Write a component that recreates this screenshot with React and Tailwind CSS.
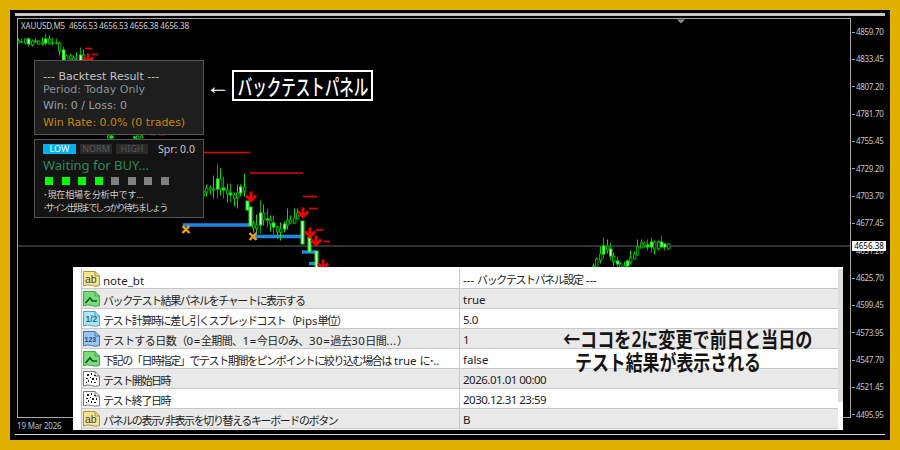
const rnd = (s) => { const v = Math.sin(s * 127.1 + 11.7) * 43758.5453; return v - Math.floor(v); };

function series(points, seed, amp = 7, step = 3.4) {
  const out = [];
  let prev = points[0][1];
  let i = 0;
  for (let x = points[0][0]; x <= points[points.length - 1][0]; x += step) {
    let k = 0;
    while (k < points.length - 2 && points[k + 1][0] < x) k++;
    const [x0, y0] = points[k];
    const [x1, y1] = points[k + 1];
    const base = y0 + ((y1 - y0) * (x - x0)) / (x1 - x0);
    const y = base + (rnd(seed + i) - 0.5) * amp;
    const top = Math.min(prev, y);
    const bot = Math.max(prev, y);
    const hi = top - rnd(seed + i + 40) * amp;
    const lo = bot + rnd(seed + i + 80) * amp * 0.9;
    out.push({ x: Math.round(x), top: Math.round(top), bot: Math.round(bot) + 1, hi: Math.round(hi), lo: Math.round(lo), kind: rnd(seed + i + 120) });
    prev = y;
    i++;
  }
  return out;
}

const candles = [
  ...series([[18, 40], [30, 41], [45, 39], [55, 41]], 1, 5),
  ...series([[56, 42], [60, 54], [66, 57], [80, 56], [90, 62]], 2, 8),
  ...series([[108, 136], [112, 136]], 3, 3),
  ...series([[134, 136], [144, 136]], 4, 3),
  ...series([[203, 194], [209, 183], [218, 180], [228, 190], [240, 188], [247, 196]], 5, 14),
  ...series([[253, 222], [262, 212], [272, 222], [282, 226], [292, 218], [300, 216]], 7, 12),
  ...series([[593, 265], [598, 250], [606, 244], [612, 258], [622, 264], [630, 260], [637, 246], [650, 243], [670, 245]], 6, 8),
];

const big = [[247, 200, 210], [250, 206, 226], [302, 220, 244], [309, 236, 252], [316, 250, 268]];
const reds = [[203, 250, 152], [250, 303, 172.5], [303, 317, 196], [309, 317, 208], [316, 323, 229.5], [323, 330, 241], [85, 92, 48], [92, 98, 54], [151, 156, 134], [159, 165, 134]];
const arrows = [[88, 52], [251, 190], [303, 206], [310, 226], [316, 234], [323, 258]];
const blues = [[183, 250, 224.5], [253, 303, 236], [302, 316, 251.5], [309, 316, 263]];
const crosses = [[186, 229], [253, 236]];
const prices = ["4859.70", "4833.45", "4807.20", "4781.70", "4755.45", "4729.20", "4703.70", "4677.45", "4651.20", "4625.70", "4599.45", "4573.95", "4547.70", "4521.45", "4495.95"];

function Chart() {
  return (
    <svg className="absolute inset-0 h-full w-full" viewBox="18 19 832 397">
      <path d="M18 245.5H850" stroke="#444" strokeWidth="1.5" />
      {blues.map(([a, b, y], i) => <path key={i} d={`M${a} ${y}H${b}`} stroke="#1e88e5" strokeWidth="3.4" />)}
      {candles.map((c, i) => (
        <g key={i}>
          <path d={`M${c.x + 0.5} ${c.hi}V${c.lo}`} stroke={c.kind > 0.5 ? "#00a800" : "#00e000"} strokeWidth="1" />
          {c.kind > 0.4 ? (
            <g>
              <rect x={c.x - 1} y={c.top} width="3.4" height={Math.max(c.bot - c.top, 1)} fill="#00ee00" />
              {c.bot - c.top > 3 && <rect x={c.x} y={c.top + 1} width="1.4" height={c.bot - c.top - 2} fill="#c8ffc8" />}
            </g>
          ) : (
            <rect x={c.x - 0.5} y={c.top + 0.5} width="2.4" height={Math.max(c.bot - c.top, 1)} fill="#000" stroke="#00b000" strokeWidth="1" />
          )}
        </g>
      ))}
      {big.map(([x, a, b], i) => (
        <g key={i}>
          <rect x={x - 1.5} y={a} width="4" height={b - a} fill="#00ee00" />
          <rect x={x - 0.3} y={a + 1} width="1.6" height={b - a - 2} fill="#d0ffd0" />
        </g>
      ))}
      {reds.map(([a, b, y], i) => <path key={i} d={`M${a} ${y}H${b}`} stroke="#e60000" strokeWidth="1.7" />)}
      {arrows.map(([x, y], i) => (
        <path key={i} d={`M${x} ${y + 1}V${y + 9}M${x - 5} ${y + 5}L${x} ${y + 10.5}L${x + 5} ${y + 5}`} fill="none" stroke="#f00000" strokeWidth="2.8" />
      ))}
      {crosses.map(([x, y], i) => (
        <path key={i} d={`M${x - 3.5} ${y - 3.5}L${x + 3.5} ${y + 3.5}M${x + 3.5} ${y - 3.5}L${x - 3.5} ${y + 3.5}`} stroke="#f0a020" strokeWidth="2.4" />
      ))}
      <path d="M677 19H685L681 23Z" fill="#8a8f98" />
    </svg>
  );
}

function Mixed({ text, wide }) {
  const parts = text.split(/([\x20-\x7e]+)/).filter(Boolean);
  return (
    <span className={`whitespace-nowrap text-[11px] ${wide ? "tracking-[-0.55px]" : "tracking-[-1.4px]"}`}>
      {parts.map((p, i) =>
        /^[\x20-\x7e]+$/.test(p) ? (
          <span key={i} className={`text-[11.5px] ${wide ? "tracking-[0.5px]" : /\d/.test(p) ? "tracking-[-0.5px]" : "tracking-normal"}`}>{p}</span>
        ) : (
          <span key={i}>{p}</span>
        )
      )}
    </span>
  );
}

function Icon({ type }) {
  const skins = {
    ab: ["#f5e48f", "#a8923c"],
    bool: ["#79db79", "#3fa34d"],
    half: ["#aee6f5", "#4aa3c0"],
    num: ["#9cc6f0", "#3f75b0"],
    date: ["#ffffff", "#777777"],
  };
  const [fill, stroke] = skins[type];
  return (
    <svg className="h-4 w-[17px] shrink-0" viewBox="0 0 17 16">
      <path d="M0.5 0.5H12L16.5 5V14.5Q12.5 16 8.5 14.5T0.5 15Z" fill={fill} stroke={stroke} />
      <path d="M12 0.5V5H16.5" fill="none" stroke={stroke} />
      {type === "ab" && <text x="2" y="11.5" fontSize="10.5" fontFamily="Liberation Sans" fill="#444">ab</text>}
      {type === "half" && <text x="2.5" y="11" fontSize="8.5" fontWeight="700" fontFamily="Liberation Sans" fill="#2b6d86">1/2</text>}
      {type === "num" && <text x="1.5" y="11" fontSize="7" fontWeight="700" fontFamily="Liberation Sans" fill="#1d4a80">123</text>}
      {type === "bool" && <path d="M2.5 12L7 7L9.5 10H14" fill="none" stroke="#0b5d1e" strokeWidth="1.6" />}
      {type === "date" && <path d="M4 3h2v2H4zM8 2h1v2H8zM11 4h2v1h-2zM3 7h2v1H3zM7 6h1v1H7zM9 7h2v2H9zM13 7h1v2h-1zM5 9h1v2H5zM3 11h1v1H3zM8 10h1v2H8zM11 11h2v1h-2z" fill="#222" />}
    </svg>
  );
}

const rows = [
  ["ab", "note_bt", "--- バックテストパネル設定 ---"],
  ["bool", "バックテスト結果パネルをチャートに表示する", "true"],
  ["half", "テスト計算時に差し引くスプレッドコスト（Pips単位）", "5.0"],
  ["num", "テストする日数（0=全期間、1=今日のみ、30=過去30日間...）", "1", true],
  ["bool", "下記の「日時指定」でテスト期間をピンポイントに絞り込む場合は true に･..", "false"],
  ["date", "テスト開始日時", "2026.01.01 00:00"],
  ["date", "テスト終了日時", "2030.12.31 23:59"],
  ["ab", "パネルの表示/非表示を切り替えるキーボードのボタン", "B"],
];

function Table() {
  return (
    <div className="absolute left-[63px] top-[257px] flex h-[163px] w-[770px] bg-white pl-2 pt-[2px] font-['Noto_Sans','Noto_Sans_CJK_JP',sans-serif] text-[#222]">
      <div className="flex w-[757px] flex-col border-l border-[#c4c4c4]">
        {rows.map(([icon, name, value, wide], i) => (
          <div key={i} className={`flex h-5 items-center border-b border-[#c8c8c8] ${i % 2 ? "bg-[#e9e9e9]" : "bg-white"}`}>
            <div className="flex h-full w-[378px] items-center gap-[3px] overflow-hidden border-r border-[#c8c8c8] pl-[1px]">
              <Icon type={icon} />
              <div><Mixed text={name} wide={wide} /></div>
            </div>
            <div className="pb-[2px] pl-[3px]"><Mixed text={value} /></div>
          </div>
        ))}
      </div>
      <div className="w-[5px] bg-white">
        <div className="h-[133px] bg-[#dedede]" />
      </div>
      <div className="absolute left-[490px] top-[61px] flex flex-col text-[21px] font-semibold leading-[23px] text-[#151515]">
        <span className="origin-left scale-x-[0.815] whitespace-nowrap">←ココを2に変更で前日と当日の</span>
        <span className="ml-3 origin-left scale-x-[0.805] whitespace-nowrap">テスト結果が表示される</span>
      </div>
    </div>
  );
}

function BacktestPanel() {
  return (
    <div className="absolute left-6 top-[50px] flex h-[75px] w-[170px] flex-col border border-[#555] bg-[#1e1e1e] pl-2 pt-[8px] font-['DejaVu_Sans',sans-serif] text-[11px]">
      <div className="leading-[15px] text-[#c4c4c4]">--- Backtest Result ---</div>
      <div className="leading-[14px] -mt-[1px] text-[#85919c]">Period: Today Only</div>
      <div className="mt-[1px] leading-[15px] text-[#95a0aa]">Win: 0 / Loss: 0</div>
      <div className="mt-[2px] leading-[15px] text-[#c8860d]">Win Rate: 0.0% (0 trades)</div>
    </div>
  );
}

function SignalPanel() {
  return (
    <div className="absolute left-6 top-[129px] flex h-[79px] w-[170px] flex-col border border-[#555] bg-[#141414] pl-2 pt-[4px] font-['Noto_Sans','Noto_Sans_CJK_JP',sans-serif]">
      <div className="flex items-center gap-1 text-[9px] leading-[10px]">
        <span className="w-[33px] bg-[#00b0f0] text-center text-white">LOW</span>
        <span className="w-8 bg-[#2a2a2a] text-center text-[#585858]">NORM</span>
        <span className="w-8 bg-[#2a2a2a] text-center text-[#585858]">HIGH</span>
        <span className="ml-[6px] text-[10.5px] text-[#c4c4c4]">Spr: 0.0</span>
      </div>
      <div className="mt-[1px] text-[13px] leading-[20px] text-[#2e8b57]">Waiting for BUY...</div>
      <div className="ml-[2px] mt-[2px] flex gap-[8.5px]">
        {[0, 1, 2, 3].map((i) => <span key={i} className="h-2 w-2 bg-[#00ff00]" />)}
        {[4, 5, 6, 7].map((i) => <span key={i} className="h-2 w-2 bg-[#808080]" />)}
      </div>
      <div className="mt-[3px] whitespace-nowrap text-[9px] leading-[13px] text-[#cfcfcf]">
        <div className="tracking-[-0.1px]">･現在相場を分析中です...</div>
        <div className="tracking-[-1.9px]">･サイン出現までしっかり待ちましょう</div>
      </div>
    </div>
  );
}

export default function App() {
  return (
    <div className="relative h-[450px] w-[900px] overflow-hidden border-[10px] border-[#e0b000] bg-black px-[5px] pt-[3px] font-['Noto_Sans',sans-serif]">
      <div className="h-[3px] bg-[#c8c8c8]" />
      <div className="mt-[2px] flex pl-[2px]">
        <div className="w-[834px]">
          <div className="relative h-[400px] border border-[#a8a8a8] pl-[3px] pt-[1px]">
            <Chart />
            <div className="relative whitespace-pre text-[8px] leading-[12px] tracking-[-0.15px] text-[#d0d0d0]">XAUUSD,M5  4656.53 4656.53 4656.38 4656.38</div>
          </div>
          <div className="flex h-4 items-center text-[8px] tracking-[-0.2px] text-[#a9c4d6]">19 Mar 2026</div>
        </div>
        <div className="relative ml-[1px] mt-2 flex h-[395px] flex-1 flex-col justify-between">
          {prices.map((p) => (
            <div key={p} className="flex h-3 items-center gap-[1px] text-[8px] tracking-[-0.3px] text-[#c8c8c8]">
              <span className="h-px w-[3px] bg-[#a8a8a8]" />
              <span>{p}</span>
            </div>
          ))}
          <div className="absolute left-0 top-[215px] h-[10px] w-[34px] bg-white text-center text-[8px] leading-[10px] text-black">4656.38</div>
        </div>
      </div>
      <div className="h-px bg-[#d8d8d8]" />

      <BacktestPanel />
      <SignalPanel />
      <div className="absolute left-[196px] top-[60px] flex items-center gap-[4px]">
        <span className="w-[22px] text-center font-['Liberation_Sans'] text-[24px] leading-none text-white">←</span>
        <div className="flex h-[31px] w-[141px] items-center justify-center border-2 border-white bg-black font-['Noto_Sans_CJK_JP',sans-serif] text-[22px] font-medium text-white">
          <span className="scale-x-[0.66] whitespace-nowrap">バックテストパネル</span>
        </div>
      </div>
      <Table />
    </div>
  );
}
